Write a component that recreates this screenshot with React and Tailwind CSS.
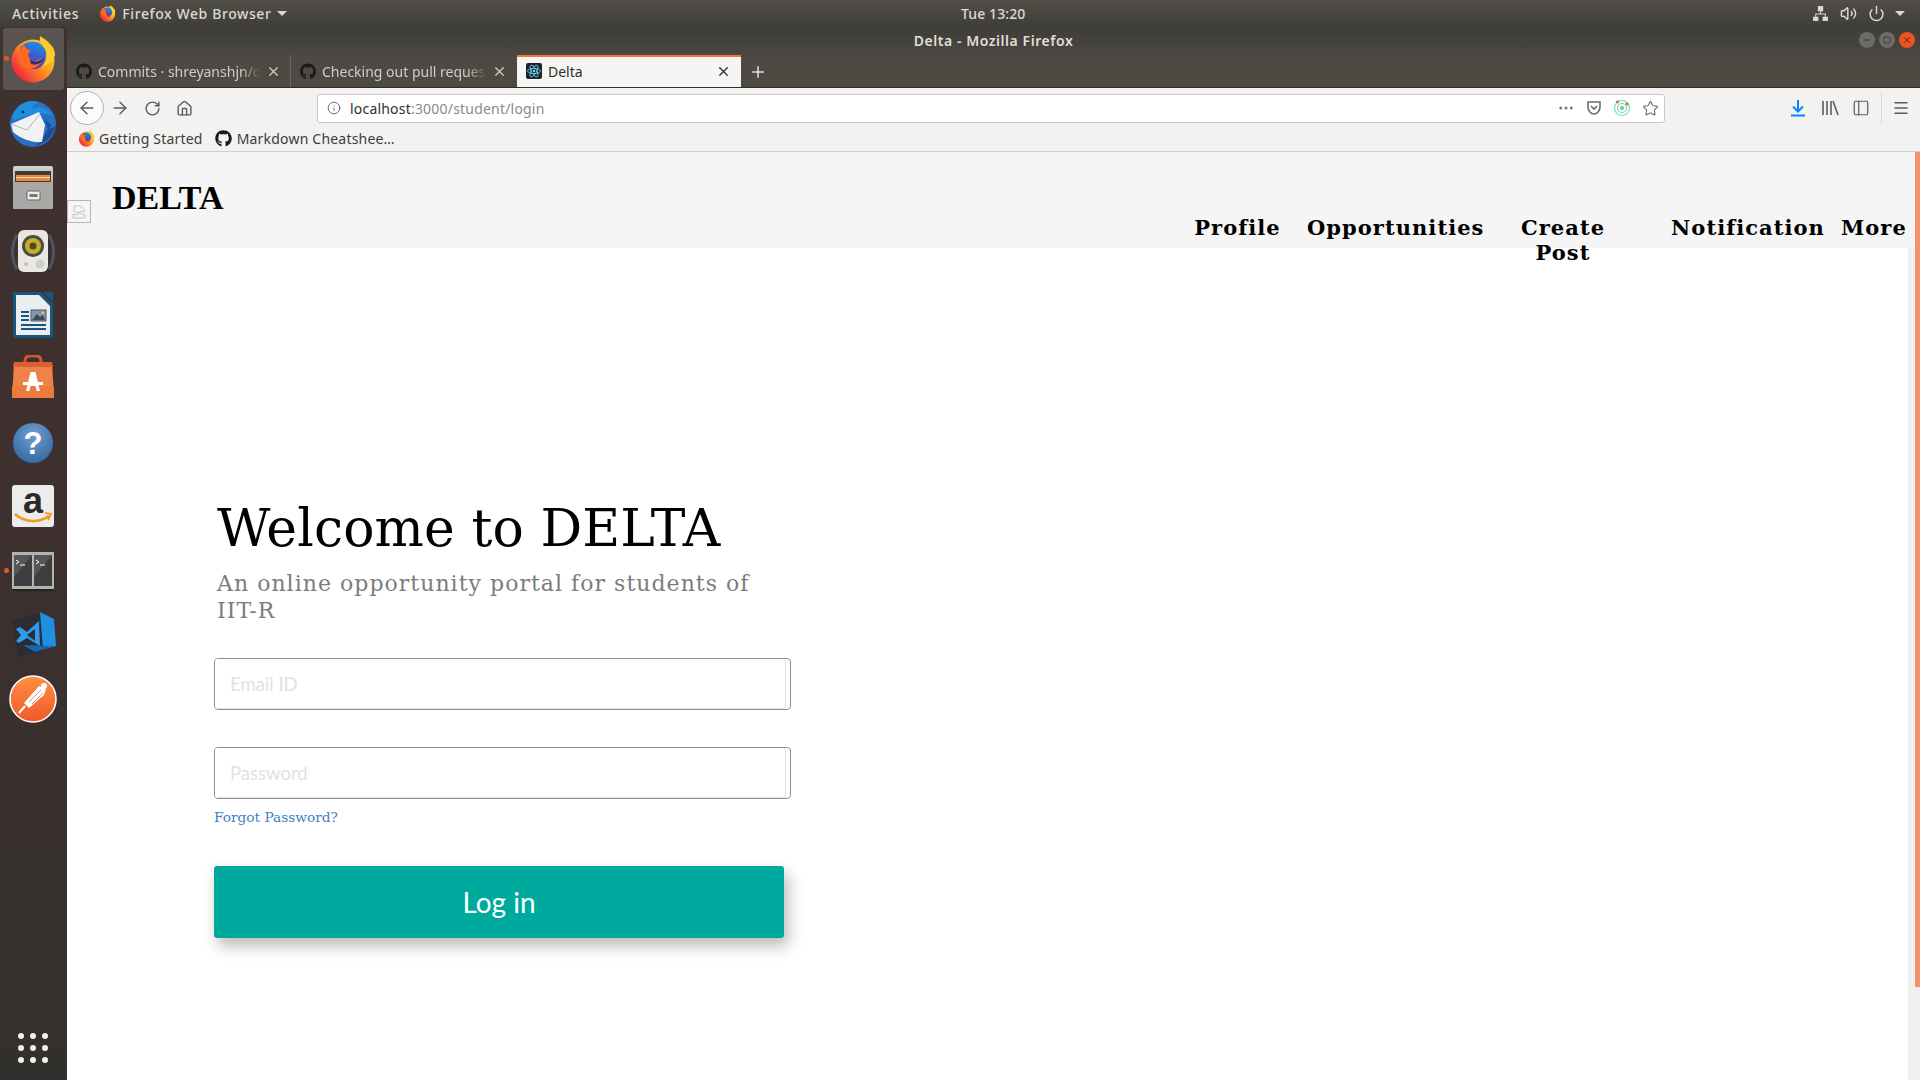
import React from 'react';
import { FaGithub } from 'react-icons/fa';
import {
  ArrowLeft, ArrowRight, RotateCw, House, Info, Ellipsis, Star, X, Plus,
  PanelLeft, Menu, Volume2, Power, Minus, Square,
} from 'lucide-react';

const ui = 'font-["Noto_Sans",sans-serif]';
const serif = 'font-["DejaVu_Serif",serif]';

const FirefoxIcon = ({ size = 48 }) => (
  <svg width={size} height={size} viewBox="0 0 48 48">
    <defs>
      <linearGradient id="ffOuter" x1="0.9" y1="0.1" x2="0.1" y2="0.8">
        <stop offset="0" stopColor="#ffd83a" />
        <stop offset="0.45" stopColor="#ff9a1f" />
        <stop offset="1" stopColor="#f0263f" />
      </linearGradient>
      <linearGradient id="ffInner" x1="0.6" y1="0" x2="0.3" y2="1">
        <stop offset="0" stopColor="#1f8be8" />
        <stop offset="1" stopColor="#5b2bb5" />
      </linearGradient>
    </defs>
    <circle cx="24" cy="26" r="21.5" fill="url(#ffOuter)" />
    <path d="M11 13 C17 5 30 5 35 12 C40 20 36 33 26 34 C18 35 12 28 13 22 Z" fill="url(#ffInner)" />
    <path d="M15 9 C16 14 20 15 22 15 C19 18 18 21 21 24 C24 27 31 26 34 22 C33 30 25 36 17 33 C9 30 7 19 15 9 Z" fill="#ff6a1f" />
    <path d="M31 1 C30 7 33 10 36 14 C39 19 38 27 33 32 C41 29 46 24 46 19 C46 12 38 5 31 1 Z" fill="#ffc928" />
    <path d="M21 24 C25 28 31 27 35 22 C34 28 27 31 22 29 Z" fill="#2a2f7a" />
  </svg>
);

const ThunderbirdIcon = () => (
  <svg width="48" height="48" viewBox="0 0 48 48">
    <circle cx="24" cy="25" r="23" fill="#2a6fc4" />
    <path d="M4 17 C8 4 22 -1 30 4 C26 4 23 7 23 10 C30 6 40 9 44 17 C36 13 24 13 4 22 Z" fill="#1f8fdc" />
    <path d="M26 47 C36 45 44 38 47 26 C43 30 41 30 39 29 C37 36 32 42 26 47 Z" fill="#1d4b99" />
    <path d="M2 25 L30 13 L36 26 L33 43 C24 44 12 40 4 33 Z" fill="#f2f2f4" />
    <path d="M2 25 L18 31 L31 15" fill="none" stroke="#aeb4c0" strokeWidth="1" />
    <path d="M36 20 L42 26 L36 38 L39 30 Z" fill="#1d4b99" />
    <circle cx="14" cy="13" r="1.4" fill="#0c2c5c" />
  </svg>
);

const FilesIcon = () => (
  <svg width="48" height="48" viewBox="0 0 48 48">
    <defs>
      <linearGradient id="cab" x1="0" y1="0" x2="0" y2="1">
        <stop offset="0" stopColor="#d2d2d0" />
        <stop offset="1" stopColor="#888886" />
      </linearGradient>
    </defs>
    <rect x="4" y="3" width="40" height="43" rx="2" fill="url(#cab)" />
    <rect x="6" y="8" width="36" height="12" fill="#3f3b36" />
    <rect x="7" y="12" width="34" height="6" fill="#e8873f" />
    <rect x="7" y="14" width="34" height="1" fill="#f7d7b0" />
    <rect x="4" y="19" width="40" height="27" rx="1" fill="#a8a8a6" />
    <rect x="18" y="28" width="13" height="9" rx="1" fill="#ededeb" stroke="#66665f" />
    <rect x="20.5" y="31" width="8" height="3" fill="#77776f" />
  </svg>
);

const SpeakerIcon = () => (
  <svg width="48" height="48" viewBox="0 0 48 48">
    <path d="M8 8 C2 18 2 32 8 42 M40 8 C46 18 46 32 40 42" stroke="#4d5560" strokeWidth="3" fill="none" />
    <rect x="9" y="3" width="30" height="42" rx="6" fill="#e9e7e2" />
    <circle cx="24" cy="19" r="11" fill="#4a4a46" />
    <circle cx="24" cy="19" r="8" fill="#c9ab24" />
    <circle cx="24" cy="19" r="3.5" fill="#4a4a30" />
    <circle cx="31" cy="37" r="4.5" fill="#cfcfca" />
    <circle cx="17" cy="37" r="2" fill="#c2c2bd" />
  </svg>
);

const WriterIcon = () => (
  <svg width="48" height="48" viewBox="0 0 48 48">
    <path d="M4 1 H32 L44 13 V45 Q44 47 42 47 H6 Q4 47 4 45 Z" fill="#17577f" />
    <path d="M34 1 L44 1 L44 11 Z" fill="#17577f" />
    <path d="M7 4 H30 L41 15 V44 H7 Z" fill="#ebedf0" />
    <rect x="12" y="20" width="8" height="2" fill="#17577f" />
    <rect x="12" y="24" width="8" height="2" fill="#17577f" />
    <rect x="12" y="28" width="8" height="2" fill="#17577f" />
    <rect x="12" y="33" width="25" height="2" fill="#17577f" />
    <rect x="12" y="37" width="25" height="2" fill="#17577f" />
    <rect x="22" y="19" width="15" height="11" fill="#7f98ad" stroke="#4b5f70" />
    <path d="M23 29 L28 23 L31 26 L34 24 L36 29 Z" fill="#3f4a55" />
    <circle cx="34" cy="22" r="1.5" fill="#e9c04a" />
  </svg>
);

const SoftwareIcon = () => (
  <svg width="48" height="48" viewBox="0 0 48 48">
    <path d="M16 11 V6 Q16 1 21 1 H27 Q32 1 32 6 V11" fill="none" stroke="#d4562a" strokeWidth="3" />
    <path d="M5 7 H43 L45 43 H3 Z" fill="#ef8248" />
    <path d="M5 7 H43 L44 12 H4 Z" fill="#d9602f" />
    <path d="M3 31 H45 V43 H3 Z" fill="#ec7a3f" />
    <path d="M21.5 17 H26.5 L31 36 H27.5 L26.5 31 H21.5 L20.5 36 H17 Z" fill="#fff" />
    <rect x="14" y="27" width="20" height="3" fill="#fff" />
  </svg>
);

const HelpIcon = () => (
  <svg width="48" height="48" viewBox="0 0 48 48">
    <defs>
      <radialGradient id="helpBg" cx="0.5" cy="0.3" r="0.8">
        <stop offset="0" stopColor="#6f9fd0" />
        <stop offset="1" stopColor="#2c629c" />
      </radialGradient>
    </defs>
    <circle cx="24" cy="24" r="20" fill="url(#helpBg)" />
    <text x="24" y="35" textAnchor="middle" fontSize="31" fontWeight="700" fill="#fff" fontFamily="Liberation Sans, sans-serif">?</text>
  </svg>
);

const AmazonIcon = () => (
  <svg width="48" height="48" viewBox="0 0 48 48">
    <rect x="3" y="2" width="42" height="42" rx="3" fill="#ececec" />
    <text x="24" y="30" textAnchor="middle" fontSize="36" fontWeight="700" fill="#2a2a2a" fontFamily="Liberation Sans, sans-serif">a</text>
    <path d="M6 31 C16 40 30 40 40 33" fill="none" stroke="#f39a1c" strokeWidth="2.6" />
    <path d="M36 30 L42 31 L39 37" fill="none" stroke="#f39a1c" strokeWidth="2" />
  </svg>
);

const TerminalIcon = () => (
  <svg width="48" height="48" viewBox="0 0 48 48">
    <rect x="3" y="5" width="42" height="37" fill="#b4b4ae" />
    <rect x="5" y="8" width="18" height="31" fill="#3d3e40" />
    <rect x="25" y="8" width="18" height="31" fill="#3d3e40" />
    <path d="M5 8 H23 L5 30 Z M25 8 H43 L25 30 Z" fill="#55565a" />
    <path d="M7 13 L10 15 L7 17" stroke="#fff" strokeWidth="1" fill="none" />
    <path d="M11 18 H16" stroke="#fff" strokeWidth="1" />
    <path d="M27 13 L30 15 L27 17" stroke="#fff" strokeWidth="1" fill="none" />
    <path d="M31 18 H36" stroke="#fff" strokeWidth="1" />
    <rect x="3" y="42" width="42" height="2" fill="#23231f" />
  </svg>
);

const VSCodeIcon = () => (
  <svg width="48" height="48" viewBox="0 0 48 48">
    <path d="M3 9 L36 1 L34 40 L9 46 Z" fill="#2c2c32" />
    <path d="M31 1 L45 8 L47 35 L34 38 Z" fill="#1f8fe0" />
    <path d="M7 18 L11 16 L18 21 L30 10 L31 35 L18 27 L10 32 L7 30 L12 24 Z" fill="#2c9cf0" />
    <path d="M18 24 L26 18 L26 30 Z" fill="#2c2c32" />
    <path d="M14 34 L47 35 L26 41 Z" fill="#1668ad" />
  </svg>
);

const PostmanIcon = () => (
  <svg width="48" height="48" viewBox="0 0 48 48">
    <defs>
      <linearGradient id="pm" x1="0" y1="0" x2="0" y2="1">
        <stop offset="0" stopColor="#ff8f45" />
        <stop offset="1" stopColor="#f0582a" />
      </linearGradient>
    </defs>
    <circle cx="24" cy="24" r="23" fill="url(#pm)" stroke="#fff" strokeWidth="1.6" />
    <path d="M30 11 L37 14 L35 20 L20 33 L15 28 Z" fill="#fff" />
    <circle cx="35" cy="11" r="3" fill="#fff" />
    <path d="M16 31 L10 38" stroke="#fff" strokeWidth="2" />
    <path d="M20 27 L32 15 M23 29 L34 18" stroke="#f0582a" strokeWidth="0.7" />
  </svg>
);

const dockIcons = [
  { id: 'firefox', icon: <FirefoxIcon />, active: true },
  { id: 'thunderbird', icon: <ThunderbirdIcon /> },
  { id: 'files', icon: <FilesIcon /> },
  { id: 'speaker', icon: <SpeakerIcon /> },
  { id: 'writer', icon: <WriterIcon /> },
  { id: 'software', icon: <SoftwareIcon /> },
  { id: 'help', icon: <HelpIcon /> },
  { id: 'amazon', icon: <AmazonIcon /> },
  { id: 'terminal', icon: <TerminalIcon />, running: true },
  { id: 'vscode', icon: <VSCodeIcon /> },
  { id: 'postman', icon: <PostmanIcon /> },
];

const Dock = () => (
  <aside className="relative flex w-[67px] shrink-0 flex-col items-center bg-gradient-to-b from-[#3e312f] via-[#3d302e] to-[#32302d] pr-[1px] pt-[1px]">
    {dockIcons.map((item) => (
      <div
        key={item.id}
        className={`relative mb-[2px] flex h-[62px] w-[61px] items-center justify-center rounded-[3px] ${item.active ? 'bg-[#5b5350]' : ''}`}
      >
        {(item.active || item.running) && (
          <span className="absolute left-[1px] top-[28px] h-[5px] w-[5px] rounded-full bg-[#e95420]" />
        )}
        {item.icon}
      </div>
    ))}
    <div className="absolute bottom-[17px] left-[18px] grid grid-cols-3 gap-x-[6px] gap-y-[6px]">
      {Array.from({ length: 9 }).map((_, i) => (
        <span key={i} className="h-[6px] w-[6px] rounded-full bg-[#f0f0f0]" />
      ))}
    </div>
  </aside>
);

const TopPanel = () => (
  <header className={`flex h-[27px] shrink-0 items-center bg-gradient-to-b from-[#524f48] to-[#3f3d38] text-[14px] text-[#dcdad5] ${ui}`}>
    <span className="ml-[12px] font-medium tracking-[0.7px]">Activities</span>
    <span className="ml-[20px] flex items-center gap-[6px] font-medium tracking-[0.6px]">
      <FirefoxIcon size={17} />
      Firefox Web Browser
      <span className="h-0 w-0 border-x-[5px] border-t-[5px] border-x-transparent border-t-[#dcdad5]" />
    </span>
    <span className="absolute left-[961px] font-medium tracking-[0.1px]">Tue 13:20</span>
    <div className="ml-auto mr-[15px] flex items-center gap-[11px]">
      <svg width="17" height="17" viewBox="0 0 16 16" fill="#dcdad5">
        <rect x="5.5" y="1" width="5" height="5" />
        <rect x="1" y="11" width="5" height="4" />
        <rect x="10" y="11" width="5" height="4" />
        <path d="M7.5 6 H8.5 V8 H13 V11 H12 V9 H4 V11 H3 V8 H7.5 Z" />
      </svg>
      <Volume2 size={17} strokeWidth={2} />
      <Power size={17} strokeWidth={2} />
      <span className="-ml-[1px] h-0 w-0 border-x-[5px] border-t-[5px] border-x-transparent border-t-[#dcdad5]" />
    </div>
  </header>
);

const TitleBar = () => (
  <div className={`relative flex h-[29px] shrink-0 items-center justify-center bg-gradient-to-b from-[#3f3d38] to-[#4a4841] pb-[2px] text-[14px] font-semibold tracking-[0.55px] text-[#e0ded8] ${ui}`}>
    Delta - Mozilla Firefox
    <div className="absolute right-[5px] top-[5px] flex gap-[4px]">
      <span className="flex h-[16px] w-[16px] items-center justify-center rounded-full bg-[#6e6c67] text-[#2f2e2b]"><Minus size={10} /></span>
      <span className="flex h-[16px] w-[16px] items-center justify-center rounded-full bg-[#6e6c67] text-[#2f2e2b]"><Square size={8} /></span>
      <span className="flex h-[16px] w-[16px] items-center justify-center rounded-full bg-[#e95420] text-[#4a1a08]"><X size={10} /></span>
    </div>
  </div>
);

const Tab = ({ title, width, active, divider, fade, icon }) => (
  <div
    className={`relative flex h-[32px] shrink-0 items-center pl-[9px] pr-[10px] text-[14px] ${width} ${active ? 'border-t-2 border-[#ff7139] bg-[#f5f5f4] pb-[2px] text-[#2f2e2b]' : 'text-[#cfcdc8]'} ${divider ? 'border-r border-[#6a6862]' : ''}`}
  >
    <span className="mr-[6px] flex w-[16px] justify-center">{icon}</span>
    <span className={`flex-1 whitespace-nowrap ${fade ? '[mask-image:linear-gradient(to_right,black_88%,transparent)]' : ''}`}>{title}</span>
    <X size={15} className="ml-[5px] shrink-0" />
  </div>
);

const ReactFavicon = () => (
  <svg width="16" height="16" viewBox="0 0 16 16">
    <rect width="16" height="16" rx="2" fill="#20232a" />
    <g fill="none" stroke="#61dafb" strokeWidth="0.8">
      <ellipse cx="8" cy="8" rx="6.5" ry="2.6" />
      <ellipse cx="8" cy="8" rx="6.5" ry="2.6" transform="rotate(60 8 8)" />
      <ellipse cx="8" cy="8" rx="6.5" ry="2.6" transform="rotate(120 8 8)" />
    </g>
    <circle cx="8" cy="8" r="1.3" fill="#61dafb" />
  </svg>
);

const TabStrip = () => (
  <div className={`flex h-[32px] shrink-0 items-end border-b border-[#2e2d2a] bg-[#4d4a43] ${ui}`}>
    <Tab title="Commits · shreyanshjn/d" width="w-[224px]" divider fade icon={<FaGithub size={17} className="text-[#1b1b1b]" />} />
    <Tab title="Checking out pull reques" width="w-[226px]" fade icon={<FaGithub size={17} className="text-[#1b1b1b]" />} />
    <Tab title="Delta" width="w-[224px]" active icon={<ReactFavicon />} />
    <Plus size={18} className="ml-[8px] mb-[6px] text-[#e4e2dd]" />
  </div>
);

const NavBar = () => (
  <div className={`relative flex h-[38px] shrink-0 items-center bg-[#f3f2f1] pt-[2px] text-[#5c5c5c] ${ui}`}>
    <span className="ml-[3px] flex h-[34px] w-[34px] items-center justify-center rounded-full border border-[#b1b1b1] bg-[#fbfbfb]">
      <ArrowLeft size={20} strokeWidth={1.7} />
    </span>
    <ArrowRight size={20} strokeWidth={1.7} className="ml-[6px]" />
    <RotateCw size={17} strokeWidth={2} className="ml-[14px]" />
    <House size={17} strokeWidth={2} className="ml-[15px]" />
    <div className="ml-[124px] flex h-[29px] w-[1348px] items-center rounded-[3px] border border-[#c8c8c6] bg-white pl-[9px] pr-[5px] text-[14px] tracking-[0.2px]">
      <Info size={14} strokeWidth={1.5} />
      <span className="ml-[9px] text-[#2f2f2f]">localhost</span>
      <span className="text-[#8a8a8a]">:3000/student/login</span>
      <div className="ml-auto flex items-center gap-[11px] text-[#7a7a7a]">
        <Ellipsis size={18} />
        <svg width="16" height="16" viewBox="0 0 16 16" fill="none" stroke="#6c6c6c" strokeWidth="1.6">
          <path d="M2 2 H14 V7 C14 11 11 14 8 14 C5 14 2 11 2 7 Z" />
          <path d="M5 6 L8 9 L11 6" />
        </svg>
        <svg width="18" height="18" viewBox="0 0 18 18" fill="none">
          <circle cx="9" cy="9" r="7.5" stroke="#8fe6c4" strokeWidth="1.4" />
          <circle cx="9" cy="9" r="4.5" stroke="#6fd8b0" strokeWidth="1.2" />
          <circle cx="9" cy="9" r="2" fill="#5fcfa5" />
          <circle cx="4.5" cy="3" r="1.4" fill="#e9583a" />
          <circle cx="14" cy="5" r="1.4" fill="#e9583a" />
        </svg>
        <Star size={17} strokeWidth={1.7} />
      </div>
    </div>
    <svg width="16" height="18" viewBox="0 0 16 18" fill="none" stroke="#0a84ff" strokeWidth="2" className="ml-[125px]">
      <path d="M8 1 V12 M3 7.5 L8 12.5 L13 7.5 M1 16.5 H15" />
    </svg>
    <svg width="18" height="16" viewBox="0 0 18 16" fill="none" stroke="#5c5c5c" strokeWidth="1.6" className="ml-[15px]">
      <path d="M2 1 V15 M6 1 V15 M10 1 V15 M12 1 L17 15" />
    </svg>
    <PanelLeft size={18} strokeWidth={1.6} className="ml-[13px]" />
    <span className="ml-[11px] h-[32px] w-px bg-[#d8d8d6]" />
    <Menu size={18} strokeWidth={2} className="ml-[10px]" />
  </div>
);

const BookmarkBar = () => (
  <div className={`flex h-[26px] shrink-0 items-center border-b border-[#cfcfcd] bg-[#f3f2f1] pl-[11px] text-[14px] tracking-[0.2px] text-[#3c3c3c] ${ui}`}>
    <FirefoxIcon size={17} />
    <span className="ml-[4px]">Getting Started</span>
    <FaGithub size={17} className="ml-[12px] text-[#1b1b1b]" />
    <span className="ml-[5px]">Markdown Cheatshee…</span>
  </div>
);

const navItems = [
  { label: 'Profile', className: 'w-[87px]' },
  { label: 'Opportunities', className: 'ml-[26px] w-[177px]' },
  { label: 'Create Post', className: 'ml-[29px] w-[100px]' },
  { label: 'Notification', className: 'ml-[58px] w-[154px]' },
  { label: 'More', className: 'ml-[16px] w-[65px]' },
];

const PageHeader = () => (
  <div className="relative h-[96px] shrink-0 bg-[#f5f5f5]">
    <div className="absolute left-0 top-[48px] flex h-[23px] w-[24px] items-center justify-center border border-[#b5b5b5]">
      <svg width="14" height="14" viewBox="0 0 14 14" fill="none" stroke="#b9b9b9" strokeWidth="0.8">
        <path d="M2 1 H9 L12 4 V7 L9 6 L6 8 L2 6 Z" />
        <path d="M1 9 L5 10 L8 8 L13 10 V13 H1 Z" />
      </svg>
    </div>
    <div className="flex">
      <span className='ml-[45px] mt-[26px] font-["Liberation_Serif",serif] text-[34px] font-bold leading-[40px] text-black'>DELTA</span>
      <nav className={`absolute left-[1127px] top-[63px] flex text-center text-[21px] font-bold leading-[25px] tracking-[1.05px] text-black ${serif}`}>
        {navItems.map((item) => (
          <span key={item.label} className={item.className}>{item.label}</span>
        ))}
      </nav>
    </div>
  </div>
);

const Field = ({ type, placeholder, className }) => (
  <div className={`flex h-[52px] w-[577px] rounded-[4px] border border-[#8f8f8f] bg-white ${className}`}>
    <input
      type={type}
      placeholder={placeholder}
      className='h-full w-[571px] rounded-[3px] border-r border-b border-[#e3e3e3] bg-white pl-[15px] font-["Lato",sans-serif] text-[18.5px] outline-none placeholder:text-[#e2e2de]'
    />
  </div>
);

const LoginForm = () => (
  <main className="flex-1 pl-[147px] pt-[252px]">
    <h1 className={`ml-[3px] text-[52px] font-normal leading-[56px] tracking-[0.1px] text-black ${serif}`}>Welcome to DELTA</h1>
    <p className={`ml-[3px] mt-[14px] w-[560px] text-[22px] leading-[27px] tracking-[1.03px] text-[#7c7c7c] ${serif}`}>
      An online opportunity portal for students of IIT-R
    </p>
    <Field type="email" placeholder="Email ID" className="mt-[34px]" />
    <Field type="password" placeholder="Password" className="mt-[37px]" />
    <a className={`mt-[8px] block text-[13.7px] leading-[20px] text-[#3f80c4] ${serif}`}>Forgot Password?</a>
    <button className='mt-[39px] block h-[72px] w-[570px] rounded-[3px] bg-[#00a99d] font-["Lato",sans-serif] text-[28px] text-white shadow-[4px_8px_16px_rgba(0,0,0,0.28)]'>
      Log in
    </button>
  </main>
);

const App = () => {
  return (
    <div className="relative flex h-[1080px] w-[1920px] flex-col overflow-hidden bg-white">
      <TopPanel />
      <div className="flex min-h-0 flex-1">
        <Dock />
        <div className="flex min-w-0 flex-1 flex-col">
          <TitleBar />
          <TabStrip />
          <NavBar />
          <BookmarkBar />
          <div className="relative flex min-h-0 flex-1">
            <div className="flex min-w-0 flex-1 flex-col">
              <PageHeader />
              <LoginForm />
            </div>
            <div className="absolute bottom-0 right-0 top-[96px] w-[12px] bg-[#efefee]" />
            <div className="absolute right-0 top-0 h-[835px] w-[5px] bg-[#f4916b]" />
          </div>
        </div>
      </div>
    </div>
  );
};

export default App;
